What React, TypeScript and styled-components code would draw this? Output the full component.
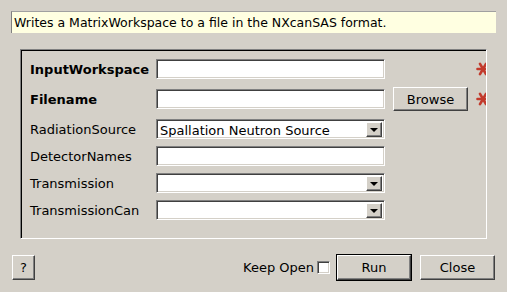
import React, { useState } from 'react';
import styled, { createGlobalStyle } from 'styled-components';

const GlobalStyle = createGlobalStyle`
  html, body {
    margin: 0;
    background: #d4d0c8;
  }
  body {
    font-family: "DejaVu Sans", "Liberation Sans", sans-serif;
    font-size: 13px;
    color: #000;
  }
`;

type Field = {
  name: string;
  required?: boolean;
  kind: 'text' | 'combo' | 'file';
  value?: string;
};

const fields: Field[] = [
  { name: 'InputWorkspace', required: true, kind: 'text' },
  { name: 'Filename', required: true, kind: 'file' },
  { name: 'RadiationSource', kind: 'combo', value: 'Spallation Neutron Source' },
  { name: 'DetectorNames', kind: 'text' },
  { name: 'Transmission', kind: 'combo' },
  { name: 'TransmissionCan', kind: 'combo' },
];

const Star = () => (
  <StarIcon viewBox="0 0 14 14">
    <g stroke="#c23a2c" strokeWidth="2.6" strokeLinecap="round">
      <line x1="1.5" y1="7" x2="12.5" y2="7" />
      <line x1="4" y1="1.8" x2="10" y2="12.2" />
      <line x1="4" y1="12.2" x2="10" y2="1.8" />
    </g>
  </StarIcon>
);

const App = () => {
  const [keepOpen, setKeepOpen] = useState(false);
  return (
    <Page>
      <GlobalStyle />
      <Description>Writes a MatrixWorkspace to a file in the NXcanSAS format.</Description>
      <Group>
        {fields.map((f) => (
          <React.Fragment key={f.name}>
            <Label bold={f.required}>{f.name}</Label>
            {f.kind === 'combo' ? (
              <Combo>
                <ComboText>{f.value}</ComboText>
                <ComboArrow>
                  <Arrow />
                </ComboArrow>
              </Combo>
            ) : (
              <TextField />
            )}
            {f.kind === 'file' ? <Browse>Browse</Browse> : <span />}
            {f.required ? <Star /> : <span />}
          </React.Fragment>
        ))}
      </Group>
      <Footer>
        <Button width={23}>?</Button>
        <Spacer />
        <KeepLabel>Keep Open</KeepLabel>
        <CheckBox onClick={() => setKeepOpen(!keepOpen)}>{keepOpen ? '✓' : ''}</CheckBox>
        <DefaultFrame>
          <Button width={74} height={25}>
            Run
          </Button>
        </DefaultFrame>
        <Button width={75}>Close</Button>
      </Footer>
    </Page>
  );
};

const Page = styled.div`
  width: 507px;
  height: 292px;
  box-sizing: border-box;
  padding: 11px 11px 0;
  display: flex;
  flex-direction: column;
  overflow: hidden;
`;

const Description = styled.div`
  height: 22px;
  box-sizing: border-box;
  background: #ffffe1;
  border-left: 1px solid #808080;
  border-top: 1px solid #a0a0a0;
  padding-left: 2px;
  font-size: 12.5px;
  line-height: 21px;
  white-space: nowrap;
`;

const Group = styled.div`
  margin: 16px 9px 0 9px;
  height: 190px;
  box-sizing: border-box;
  padding: 9px 0 0 9px;
  border: 1px solid;
  border-color: #808080 #ffffff #ffffff #808080;
  box-shadow: inset 1px 1px 0 #000, inset -1px -1px 0 #d4d0c8;
  overflow: hidden;
  display: grid;
  grid-template-columns: 118px 229px 75px 14px;
  grid-template-rows: 30px 30px 27px 27px 27px 20px;
  column-gap: 8px;
  align-items: start;
`;

const Label = styled.div<{ bold?: boolean }>`
  line-height: 20px;
  padding-top: 1px;
  font-weight: ${(p) => (p.bold ? 700 : 400)};
  white-space: nowrap;
`;

const sunken = `
  box-sizing: border-box;
  border: 1px solid;
  border-color: #808080 #ffffff #ffffff #808080;
  box-shadow: inset 1px 1px 0 #404040, inset -1px -1px 0 #d4d0c8;
  background: #fff;
`;

const raised = `
  box-sizing: border-box;
  border: 1px solid;
  border-color: #ffffff #404040 #404040 #ffffff;
  box-shadow: inset -1px -1px 0 #808080;
  background: #d4d0c8;
`;

const TextField = styled.div`
  ${sunken}
  height: 20px;
`;

const Combo = styled.div`
  ${sunken}
  height: 20px;
  display: flex;
  align-items: stretch;
  padding: 2px 2px 1px 2px;
`;

const ComboText = styled.div`
  flex: 1;
  line-height: 17px;
  padding-left: 1px;
  white-space: nowrap;
  overflow: hidden;
`;

const ComboArrow = styled.div`
  ${raised}
  width: 16px;
  display: flex;
  align-items: center;
  justify-content: center;
`;

const Arrow = styled.div`
  width: 0;
  height: 0;
  border-left: 4px solid transparent;
  border-right: 4px solid transparent;
  border-top: 4px solid #000;
`;

const Browse = styled.div`
  ${raised}
  height: 24px;
  margin-top: -2px;
  display: flex;
  align-items: center;
  justify-content: center;
`;

const StarIcon = styled.svg`
  width: 14px;
  height: 14px;
  margin-top: 3px;
  display: block;
`;

const Footer = styled.div`
  margin-top: 15px;
  height: 27px;
  display: flex;
  align-items: center;
  padding: 0 1px;
`;

const Button = styled.div<{ width: number; height?: number }>`
  ${raised}
  width: ${(p) => p.width}px;
  height: ${(p) => p.height ?? 25}px;
  display: flex;
  align-items: center;
  justify-content: center;
`;

const DefaultFrame = styled.div`
  border: 1px solid #000;
  margin-right: 8px;
`;

const Spacer = styled.span`
  flex: 1;
`;

const KeepLabel = styled.span`
  margin-right: 3px;
`;

const CheckBox = styled.div`
  ${sunken}
  width: 13px;
  height: 13px;
  margin-right: 6px;
  font-size: 10px;
  line-height: 11px;
  text-align: center;
`;

export default App;
